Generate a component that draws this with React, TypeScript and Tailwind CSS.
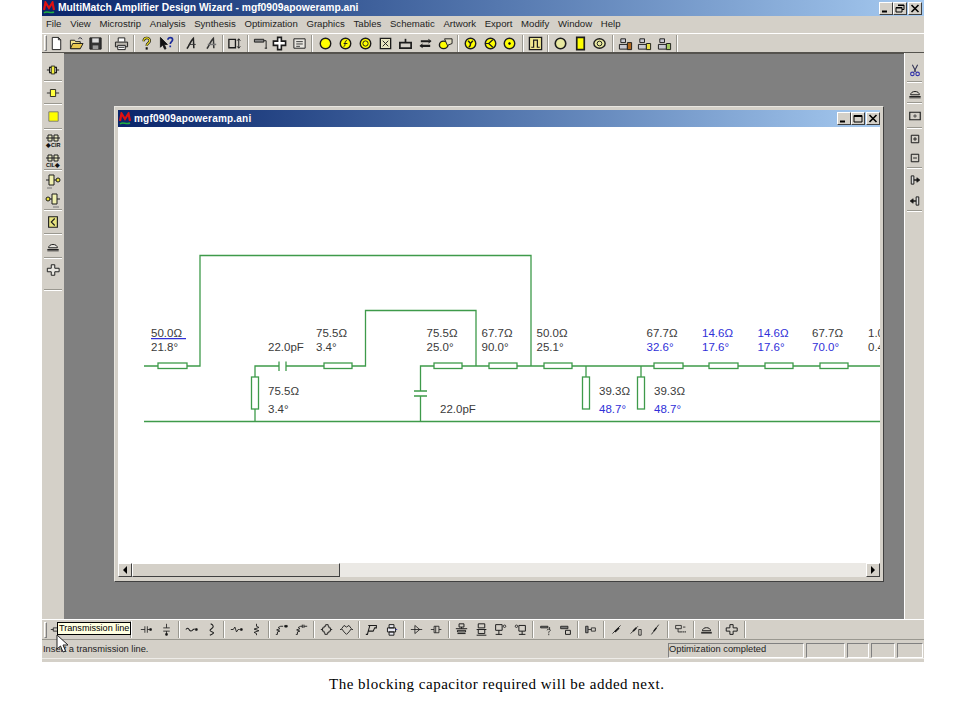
import type { ReactNode } from 'react';

const menus = ['File', 'View', 'Microstrip', 'Analysis', 'Synthesis', 'Optimization', 'Graphics', 'Tables', 'Schematic', 'Artwork', 'Export', 'Modify', 'Window', 'Help'];

function S({ children, size = 16 }: { children: ReactNode; size?: number }) {
  return (
    <svg width={size} height={size} viewBox="0 0 16 16" fill="none" stroke="#1c1c1c" strokeWidth="1">
      {children}
    </svg>
  );
}

// narrow = 19.5px grid used by most of the bars, wide = 20px for the yellow row
function B({ children, wide, size = 15 }: { children: ReactNode; wide?: boolean; size?: number }) {
  return <div className={`flex h-full shrink-0 items-center justify-center ${wide ? 'w-[20px]' : 'w-[19.5px]'}`}><S size={size}>{children}</S></div>;
}

function L({ children }: { children: ReactNode }) {
  return <B size={13}>{children}</B>;
}

function Sep({ w = 'w-[6px]' }: { w?: string }) {
  return (
    <div className={`flex h-full shrink-0 items-center justify-center ${w}`}>
      <div className="h-[17px] w-[2px] border-l border-r border-l-[#9a9890] border-r-white" />
    </div>
  );
}

function HSep() {
  return <div className="mx-[2px] h-[2px] shrink-0 border-t border-b border-t-[#9a9890] border-b-white" />;
}

function Y({ children }: { children?: ReactNode }) {
  return (
    <>
      <circle cx="8" cy="8" r="5.6" fill="#ffff00" strokeWidth="1.5" />
      {children}
    </>
  );
}

function Logo() {
  return (
    <svg width="14" height="14" viewBox="0 0 14 14" fill="none">
      <path d="M2 9 L3.5 1.5 L7 7 L10.5 1.5 L12 9" stroke="#e01010" strokeWidth="2.2" />
      <path d="M2 12 C5 9 8 13 12 11" stroke="#22b040" strokeWidth="1.6" />
    </svg>
  );
}

function WinBtn({ kind }: { kind: 'min' | 'max' | 'restore' | 'close' }) {
  return (
    <div className="flex h-[13px] w-[14px] shrink-0 items-center justify-center border border-t-white border-l-white border-r-[#404040] border-b-[#404040] bg-[#d4d0c8]">
      <svg width="10" height="9" viewBox="0 0 10 9" fill="none" stroke="#000">
        {kind === 'min' && <path d="M1 7.5H6" strokeWidth="2" />}
        {kind === 'max' && <path d="M1 1.5H9V8H1Z M1 2.5H9" />}
        {kind === 'restore' && <path d="M3 1H9V5.5H7 M3 1.5H9 M1 3.5H7V8H1Z M1 4H7" />}
        {kind === 'close' && <path d="M1.5 1L8.5 8M8.5 1L1.5 8" strokeWidth="1.6" />}
      </svg>
    </div>
  );
}

function TopBar() {
  return (
    <div className="flex h-[20px] items-center border-t border-t-white border-b border-b-[#55534e] bg-[#d4d0c8] pl-[2px]">
      <div className="mr-0 h-[16px] w-[3px] shrink-0 border border-t-white border-l-white border-r-[#808080] border-b-[#808080]" />
      <B><path d="M3.5 1.5H10L12.5 4V14.5H3.5Z" fill="#fff" /><path d="M10 1.5V4H12.5" /></B>
      <B><path d="M1.5 13.5V4.5H6L7 6H12V13.5Z" fill="#f4e48a" /><path d="M1.5 13.5L4 8H15L12 13.5Z" fill="#e8c850" /><path d="M10 3C11 1.5 13 1.5 14 3.5" stroke="#223" /></B>
      <B><path d="M2 2H14V14H2Z" fill="#333" /><path d="M4.5 2.5H11.5V7H4.5Z" fill="#dcdcdc" stroke="none" /><path d="M5 10H11V14H5Z" fill="#999" stroke="none" /></B>
      <Sep />
      <B><path d="M4.5 6V2H11.5V6" fill="#fff" /><path d="M1.5 6.5H14.5V11.5H1.5Z" fill="#b8b4ac" /><path d="M4 10H12V14.5H4Z" fill="#fff" /><path d="M5 12H11" /></B>
      <Sep />
      <B><path d="M5 5.5C5 1 11.5 1 11.5 5C11.5 7.5 8.2 7.5 8.2 10.5" stroke="#111" strokeWidth="2.6" /><path d="M5 5.5C5 1 11.5 1 11.5 5C11.5 7.5 8.2 7.5 8.2 10.5" stroke="#f0e020" strokeWidth="1.2" /><path d="M8.2 12V14.5" stroke="#111" strokeWidth="2.2" /></B>
      <B><path d="M1.5 1.5V12L4 9.5L6 14L7.5 13.5L5.7 9H9Z" fill="#111" /><path d="M9.5 4C9.5 1 14.5 1 14.5 4C14.5 6 12 6 12 8.5M12 10V12" stroke="#1a2a9a" strokeWidth="1.8" /></B>
      <Sep />
      <B><path d="M3 13.5C5 12 7 5 10 2.5L10.5 13" stroke="#222" strokeWidth="1.6" /><path d="M5 9H12.5" stroke="#333" /></B>
      <B><path d="M3 13.5C5 12 7 5 10 2.5L10.5 13" stroke="#333" strokeWidth="1.6" /><path d="M4 9H13" stroke="#777" strokeWidth="1.6" /></B>
      <Sep w="w-[4px]" />
      <B><path d="M2 3.5H9V12.5H2Z" strokeWidth="1.4" /><path d="M12.5 3V13M10.8 5L12.5 3L14.2 5M10.8 11L12.5 13L14.2 11" /></B>
      <Sep />
      <B><path d="M1.5 3.5H11.5V6.5H1.5Z" fill="#888" /><path d="M11.5 5H14V13M12.5 13H15" /></B>
      <B><path d="M6 1.5H10V5.5H14.5V10H10V14.5H6V10H1.5V5.5H6Z" strokeWidth="1.7" fill="#fff" /></B>
      <B><path d="M2 3H14V13H2Z" fill="#e8e6e0" /><path d="M4.5 6H11.5M4.5 8.5H11.5M4.5 11H8.5" stroke="#333" /></B>
      <Sep />
      <B wide><Y /></B>
      <B wide><Y><path d="M9.5 5C8 4.5 7.5 6 7.5 8S7 11.5 6 11M6 8H10" /></Y></B>
      <B wide><Y><circle cx="8" cy="8" r="2.8" /></Y></B>
      <B wide><path d="M2.5 2.5H13.5V13.5H2.5Z" fill="#e8e4c0" strokeWidth="1.4" /><path d="M5 5L11 11M11 5L5 11" /></B>
      <B wide><path d="M2 7H14V13H2Z" strokeWidth="1.8" /><path d="M8 7V3" strokeWidth="1.8" /></B>
      <B wide><path d="M3 5.5H13M3 10.5H13" strokeWidth="2.2" /><path d="M11 3.5L14 5.5L11 7.5M5 8.5L2 10.5L5 12.5" /></B>
      <B wide><ellipse cx="6" cy="9.5" rx="4.5" ry="4" fill="#ffff00" strokeWidth="1.5" /><path d="M7 3H15V8L10 10Z" fill="#e0dcc0" /></B>
      <Sep />
      <B><Y><path d="M5.5 5L8 8L10.5 5M8 8C8 10 7.5 11.5 6 11.5" strokeWidth="1.5" /></Y></B>
      <B><Y><path d="M10.5 4L6 8L10.5 12M3 8H6" strokeWidth="1.3" /></Y></B>
      <B><Y><circle cx="8" cy="8" r="1" fill="#111" /></Y></B>
      <Sep />
      <B><path d="M1.5 1.5H14.5V14.5H1.5Z" fill="#f0e890" strokeWidth="1.4" /><path d="M3.5 12H6V4.5H10V12H12.5" strokeWidth="1.3" /></B>
      <Sep />
      <B><circle cx="8" cy="8" r="5.6" fill="#e8e8a0" strokeWidth="1.7" /></B>
      <B><path d="M4 1.5H12V14.5H4Z" fill="#ffff00" strokeWidth="1.8" /></B>
      <B><ellipse cx="8" cy="8" rx="6" ry="5" fill="#e8e8a0" strokeWidth="1.5" /><circle cx="8" cy="8" r="2.5" /></B>
      <Sep />
      <B><path d="M3 3H8V7H3ZM1.5 9H10V14H1.5Z" fill="#c8c8d0" /><path d="M10 7H14.5V14.5H10Z" fill="#b06820" /></B>
      <B><path d="M3 3H8V7H3ZM1.5 9H10V14H1.5Z" fill="#c8c8d0" /><path d="M10 8H14.5V14.5H10Z" fill="#e8e040" /></B>
      <B><path d="M3 3H8V7H3ZM1.5 9H10V14H1.5Z" fill="#c8c8d0" /><path d="M10 8H14.5V14.5H10Z" fill="#a0c860" /></B>
      <Sep />
    </div>
  );
}

function Cell({ h, children, size = 14 }: { h: string; children: ReactNode; size?: number }) {
  return <div className={`flex shrink-0 items-center justify-center ${h}`}><S size={size}>{children}</S></div>;
}

function LeftBar() {
  return (
    <div className="flex w-[22px] shrink-0 flex-col bg-[#d4d0c8] pt-[6px]">
      <Cell h="h-[21px]"><path d="M1 8H4M12 8H15M4 5H12V11H4Z" strokeWidth="1.2" /><path d="M6 3.5H10V12.5H6Z" fill="#f4f040" /></Cell>
      <HSep />
      <Cell h="h-[21px]"><path d="M1 8H5M11 8H15" /><path d="M5 4H11V12H5Z" fill="#ffff40" /></Cell>
      <HSep />
      <Cell h="h-[23px]" size={15}><path d="M3 3H13V13H3Z" fill="#ffff00" stroke="#777" /></Cell>
      <HSep />
      <Cell h="h-[20px]" size={16}><path d="M1 6H15M3 3H7V9H3ZM9 3H13V9H9Z" fill="#e8e8c0" /><text x="1" y="15" fontSize="5.5" fontWeight="700" fill="#111" stroke="none" fontFamily="'Liberation Sans', sans-serif">◆CIR</text></Cell>
      <Cell h="h-[19px]" size={16}><path d="M1 6H15M3 3H7V9H3ZM9 3H13V9H9Z" fill="#e8e8c0" /><text x="1" y="15" fontSize="5.5" fontWeight="700" fill="#111" stroke="none" fontFamily="'Liberation Sans', sans-serif">CIL◆</text></Cell>
      <HSep />
      <Cell h="h-[20px]" size={16}><path d="M1 7H13" /><path d="M4 2H9V12H4Z" fill="#f0f0b0" /><circle cx="13" cy="7" r="2" fill="#e8e040" /><path d="M2 15H7" stroke="#777" /></Cell>
      <Cell h="h-[18px]" size={16}><path d="M3 7H15" /><circle cx="3" cy="7" r="2" fill="#e8e040" /><path d="M7 2H12V12H7Z" fill="#f0f0b0" /><path d="M8 15H14" stroke="#777" /></Cell>
      <HSep />
      <Cell h="h-[22px]"><path d="M3 2H13V14H3Z" fill="#e8e480" strokeWidth="1.3" /><path d="M10 4L6 8L10 12" strokeWidth="1.3" /></Cell>
      <HSep />
      <Cell h="h-[22px]"><path d="M1.5 12H14.5M3 10C3 5 13 5 13 10Z" strokeWidth="1.1" fill="#e8e6e0" /><path d="M1.5 13.5H14.5" /></Cell>
      <HSep />
      <Cell h="h-[22px]"><path d="M6 2H10V6H15V10H10V14H6V10H1.5V6H6Z" strokeWidth="1.1" fill="#e8e6e0" /></Cell>
      <div className="h-[8px]" />
      <HSep />
    </div>
  );
}

function RightBar() {
  return (
    <div className="flex w-[20px] shrink-0 flex-col border-l border-l-white bg-[#d4d0c8] pt-[6px]">
      <Cell h="h-[22px]"><path d="M5 2L9 10M11 2L7 10" stroke="#335" strokeWidth="1.2" /><circle cx="5" cy="12.5" r="2" stroke="#33a" strokeWidth="1.3" /><circle cx="11" cy="12.5" r="2" stroke="#33a" strokeWidth="1.3" /></Cell>
      <HSep />
      <Cell h="h-[19px]"><path d="M1.5 12H14.5M3 10C3 5 13 5 13 10Z" strokeWidth="1.1" /><path d="M1.5 13.5H14.5" /></Cell>
      <HSep />
      <Cell h="h-[23px]" size={12}><path d="M1 3H15V13H1Z" strokeWidth="1.5" /><circle cx="8" cy="8" r="1.5" /></Cell>
      <HSep />
      <Cell h="h-[19px]" size={10}><path d="M2 2H14V14H2Z" strokeWidth="1.6" /><path d="M5 8H11M8 5V11" strokeWidth="1.5" /></Cell>
      <Cell h="h-[19px]" size={10}><path d="M2 2H14V14H2Z" strokeWidth="1.6" /><path d="M5 8H11" strokeWidth="1.5" /></Cell>
      <HSep />
      <Cell h="h-[22px]" size={12}><path d="M3 2.5H6.5V13.5H3Z" fill="#ddd" strokeWidth="1.3" /><path d="M6.5 8H11" strokeWidth="2" /><path d="M10.5 5L14.5 8L10.5 11Z" fill="#111" /></Cell>
      <Cell h="h-[19px]" size={12}><path d="M9.5 2.5H13V13.5H9.5Z" fill="#ddd" strokeWidth="1.3" /><path d="M5 8H9.5" strokeWidth="2" /><path d="M5.5 5L1.5 8L5.5 11Z" fill="#111" /></Cell>
      <HSep />
    </div>
  );
}

// stub / line elements on the lower bar
function BottomBar() {
  return (
    <div className="relative flex h-[21px] items-center border-t border-t-white border-b border-b-[#9a9890] bg-[#d4d0c8] pl-[2px]">
      <div className="h-[16px] w-[3px] shrink-0 border border-t-white border-l-white border-r-[#808080] border-b-[#808080]" />
      <L><path d="M1 8H4M11 8H15M4 6H11V10H4Z" /></L>
      <L><path d="M8 1V14M4 9H12V13H4Z" /></L>
      <L><path d="M8 1V14M4 9H12V13H4Z" /></L>
      <L><path d="M1 8H15M5 6H11V10H5Z" /></L>
      <Sep w="w-[12px]" />
      <L><path d="M1 8H6M6 4V12M9 4V12M9 8H12" /><path d="M12 7H14V9H12Z" fill="#111" /></L>
      <L><path d="M8 1V6M8 10V15M4 6H12M4 10H12" /><path d="M7 13H9V15H7Z" fill="#111" /></L>
      <Sep />
      <L><path d="M1 8C3 6 4 6 5 8S8 11 10 8L12 7.5" strokeWidth="1.3" /><path d="M13 7H15V9H13Z" fill="#111" /></L>
      <L><path d="M7 1C11 3 11 5 8 7S6 10 9 11S10 13 6 15" strokeWidth="1.3" /></L>
      <Sep />
      <L><path d="M1 8H4L6 5L8 11L10 8H12" strokeWidth="1.1" /><path d="M13 7H15V9H13Z" fill="#111" /></L>
      <L><path d="M8 1V4L11 5.5L5 7.5L11 9.5L5 11.5L8 13V15" strokeWidth="1.1" /></L>
      <Sep />
      <L><path d="M1 14H3V11L6 10L2 8.5L6 7L4 5.5L7 4H10" strokeWidth="1.1" /><path d="M12 3H15V5H12Z" fill="#111" /></L>
      <L><path d="M1 14H3V11L6 10L2 8.5L6 7L4 5.5L7 4H9M9 2V6M11 2V6M11 4H15" strokeWidth="1.1" /></L>
      <Sep />
      <L><path d="M5 4H7V2H10V4H11V6H13V10H11V12H9V14H6V12H5V10H3V6H5Z M1 8H3 M13 8H15" strokeWidth="1.1" /></L>
      <L><path d="M5 3L8 5L11 3L14 7L11 11L8 14L5 11L2 7Z M0 8H2 M14 8H16" strokeWidth="1.1" /></L>
      <Sep />
      <L><path d="M4 3H14V6H12L10 10H4L3 14H1M6 3L4 10" strokeWidth="1.3" /></L>
      <L><path d="M5 2H11V6H5ZM3 6H13V11H3ZM5 11H11V15H5Z" strokeWidth="1.2" fill="#e8e8f0" /><path d="M13 8H15" stroke="#22a" /></L>
      <Sep />
      <L><path d="M1 8H15M6 3V13L12 8Z" fill="#d4d0c8" /></L>
      <L><path d="M1 8H5M11 8H14M5 4H11V12H5Z" /><path d="M7 4V12" /></L>
      <Sep />
      <L><path d="M5 1H11V5H5ZM1 7H15M8 5V7M3 9H13V11H3ZM3 13H13" strokeWidth="1.2" /></L>
      <L><path d="M4 1H12V6H4ZM2 8H14M4 8V13H12V8M2 15H14" strokeWidth="1.2" /></L>
      <L><path d="M2 2H10V9H2ZM6 9V14M2 14H10" strokeWidth="1.2" /><circle cx="13" cy="4" r="1.5" /></L>
      <L><path d="M6 3H14V10H6ZM10 10V14M6 14H14" strokeWidth="1.2" /><circle cx="3" cy="4" r="1.5" /></L>
      <Sep />
      <L><path d="M2 4H11V6H2Z" fill="#777" /><path d="M13 5V8M10 9C10 7 14 7 14 9L12 11V12M12 13V15" strokeWidth="1" /></L>
      <L><path d="M2 4H11V7H2Z" fill="#777" /><path d="M8 9H14V14H8Z" strokeWidth="1.2" /></L>
      <Sep />
      <L><path d="M2 4H5V12H2Z" fill="#888" /><path d="M5 8H9" /><path d="M9 6H14V10H9Z" /></L>
      <Sep />
      <L><path d="M3 13L13 3" /><path d="M6 11L11 6" strokeWidth="2.2" /></L>
      <L><path d="M2 13L11 4" /><path d="M5 10L9 6" strokeWidth="2" /><path d="M12 8H15V15H12Z" /></L>
      <L><path d="M3 14L12 2" /><path d="M6 10L9 6" strokeWidth="2" /></L>
      <Sep />
      <L><path d="M2 3H9V7H2ZM11 5H14" /><path d="M8 11H15" strokeDasharray="1.5 1" strokeWidth="1.5" /><path d="M5 7V11H8" /></L>
      <Sep />
      <L><path d="M1.5 11.5H14.5M3 9.5C3 4.5 13 4.5 13 9.5Z" strokeWidth="1.2" /><path d="M1.5 12.5H14.5" /></L>
      <Sep />
      <L><path d="M6 2H10V6H15V10H10V14H6V10H1.5V6H6Z" strokeWidth="1.2" /></L>
      <Sep />

      <div className="absolute left-[15px] top-[2px] whitespace-nowrap border border-black bg-[#ffffe1] px-[1px] text-[9.1px] leading-[11px] text-black">Transmission line</div>
      <svg className="absolute left-[14px] top-[14px]" width="14" height="20" viewBox="0 0 14 20">
        <path d="M1 1V15L4.5 12L7 18L9.5 17L7 11H12Z" fill="#fff" stroke="#222" strokeWidth="1" />
      </svg>
    </div>
  );
}

const green = '#3e9a4a';
const boxes: [number, number][] = [[158, 187], [324, 352], [434, 462], [489, 517], [544, 572], [654, 683], [709, 738], [765, 793], [820, 848]];
const stubs = [[255, 377, 409], [586, 377, 409], [641, 377, 409]];

const black = '#3a3a3a';
const blue = '#3030d8';
const labels: [string, number, number, string][] = [
  ['50.0Ω', 151, 337, black], ['21.8°', 151, 351, black],
  ['22.0pF', 268, 351, black], ['75.5Ω', 316, 337, black], ['3.4°', 316, 351, black],
  ['75.5Ω', 268, 395, black], ['3.4°', 268, 413, black],
  ['75.5Ω', 426.5, 337, black], ['25.0°', 426.5, 351, black],
  ['67.7Ω', 481.5, 337, black], ['90.0°', 481.5, 351, black],
  ['22.0pF', 440, 413, black],
  ['50.0Ω', 536.5, 337, black], ['25.1°', 536.5, 351, black],
  ['39.3Ω', 599, 395, black], ['48.7°', 599, 413, blue],
  ['39.3Ω', 654, 395, black], ['48.7°', 654, 413, blue],
  ['67.7Ω', 646.5, 337, black], ['32.6°', 646.5, 351, blue],
  ['14.6Ω', 702, 337, blue], ['17.6°', 702, 351, blue],
  ['14.6Ω', 757.5, 337, blue], ['17.6°', 757.5, 351, blue],
  ['67.7Ω', 812, 337, black], ['70.0°', 812, 351, blue],
  ['1.0Ω', 868, 337, black], ['0.4°', 868, 351, black],
];

function Circuit() {
  return (
    <svg className="block h-[436px] w-[762px]" viewBox="118 127 762 436" fill="none" stroke={green} strokeWidth="1.3">
      <path d="M144 421.5H880" />
      <path d="M144 366H158M187 366H200V255.5H531V366" />
      <path d="M255 421V409M255 377V366H279M286 366H324M279 361.5V371M286 361.5V371" />
      <path d="M352 366H365.5V310.5H476V366" />
      <path d="M420.5 421V396M420.5 391V366H434M462 366H489M517 366H544M572 366H654M683 366H709M738 366H765M793 366H820M848 366H880" />
      <path d="M414 391H427M414 396H427" />
      {boxes.map(([a, b]) => <rect key={a} x={a} y="363" width={b - a} height="5.5" fill="#fff" />)}
      {stubs.map(([x, a, b]) => <rect key={x} x={x - 3.5} y={a} width="7" height={b - a} fill="#fff" />)}
      <path d="M586 366V377M641 366V377" />
      <path d="M151 338.7H186" stroke="#3030d8" />
      {labels.map(([t, x, y, c], i) => (
        <text key={i} x={x} y={y} fill={c} stroke="none" fontSize="11.5" fontFamily="'Liberation Sans', sans-serif">{t}</text>
      ))}
    </svg>
  );
}

function ScrollBtn({ dir }: { dir: 'l' | 'r' }) {
  return (
    <div className="flex h-[14px] w-[14px] shrink-0 items-center justify-center border border-t-white border-l-white border-r-[#404040] border-b-[#404040] bg-[#d4d0c8]">
      <svg width="6" height="8" viewBox="0 0 6 8"><path d={dir === 'l' ? 'M5 0V8L1 4Z' : 'M1 0V8L5 4Z'} fill="#000" /></svg>
    </div>
  );
}

function ChildWindow() {
  return (
    <div className="w-[770px] border border-t-[#e8e6e0] border-l-[#e8e6e0] border-r-[#404040] border-b-[#404040] bg-[#d4d0c8] px-[3px] pb-[4px] pt-[3px]">
      <div className="flex h-[17px] items-center bg-gradient-to-r from-[#0a246a] to-[#a6caf0]">
        <Logo />
        <span className="ml-[2px] text-[10px] font-bold tracking-[0.2px] text-white">mgf0909apoweramp.ani</span>
        <div className="ml-auto flex">
          <WinBtn kind="min" />
          <WinBtn kind="max" />
          <div className="w-[1px]" />
          <WinBtn kind="close" />
        </div>
      </div>
      <div className="bg-white">
        <Circuit />
        <div className="flex h-[14px] bg-[#ebe9e5]">
          <ScrollBtn dir="l" />
          <div className="h-[14px] w-[208px] shrink-0 border border-t-white border-l-white border-r-[#404040] border-b-[#404040] bg-[#d4d0c8]" />
          <div className="flex-1" />
          <ScrollBtn dir="r" />
        </div>
      </div>
    </div>
  );
}

export default function App() {
  return (
    <div className="h-[720px] w-[960px] bg-white font-['Liberation_Sans',sans-serif] text-black">
      <div className="ml-[42px] flex h-[662px] w-[882px] flex-col bg-[#d4d0c8]">
        <div className="flex h-[16px] shrink-0 items-center bg-gradient-to-r from-[#0a246a] to-[#a6caf0] pr-[2px]">
          <Logo />
          <span className="ml-[2px] text-[10.3px] font-bold text-white">MultiMatch Amplifier Design Wizard - mgf0909apoweramp.ani</span>
          <div className="ml-auto flex">
            <WinBtn kind="min" />
            <WinBtn kind="restore" />
            <div className="w-[1px]" />
            <WinBtn kind="close" />
          </div>
        </div>
        <div className="flex h-[17px] shrink-0 items-center gap-[8.7px] pl-[4px] text-[9.6px] text-[#222]">
          {menus.map(m => <span key={m}>{m}</span>)}
        </div>
        <TopBar />
        <div className="flex min-h-0 flex-1">
          <LeftBar />
          <div className="flex-1 border-t border-t-[#55534e] bg-[#808080] pl-[50px] pt-[52px]">
            <ChildWindow />
          </div>
          <RightBar />
        </div>
        <BottomBar />
        <div className="flex h-[18px] shrink-0 items-center pr-[1px] pt-[2px] text-[9.3px] text-[#222]">
          <div className="flex-1 pl-[1px]">Insert a transmission line.</div>
          <div className="flex gap-[2px]">
            <div className="flex h-[15px] w-[136px] items-center border border-t-[#808080] border-l-[#808080] border-r-white border-b-white">Optimization completed</div>
            <div className="h-[15px] w-[39px] border border-t-[#808080] border-l-[#808080] border-r-white border-b-white" />
            <div className="h-[15px] w-[22px] border border-t-[#808080] border-l-[#808080] border-r-white border-b-white" />
            <div className="h-[15px] w-[24px] border border-t-[#808080] border-l-[#808080] border-r-white border-b-white" />
            <div className="h-[15px] w-[26px] border border-t-[#808080] border-l-[#808080] border-r-white border-b-white" />
          </div>
        </div>
        <div className="h-[4px] shrink-0 border-t border-t-[#eeece8] bg-[#d4d0c8]" />
      </div>
      <div className="ml-[329px] mt-[14px] font-['Liberation_Serif',serif] text-[15px] leading-[17px] tracking-[0.5px] whitespace-nowrap text-black">
        The blocking capacitor required will be added next.
      </div>
    </div>
  );
}
